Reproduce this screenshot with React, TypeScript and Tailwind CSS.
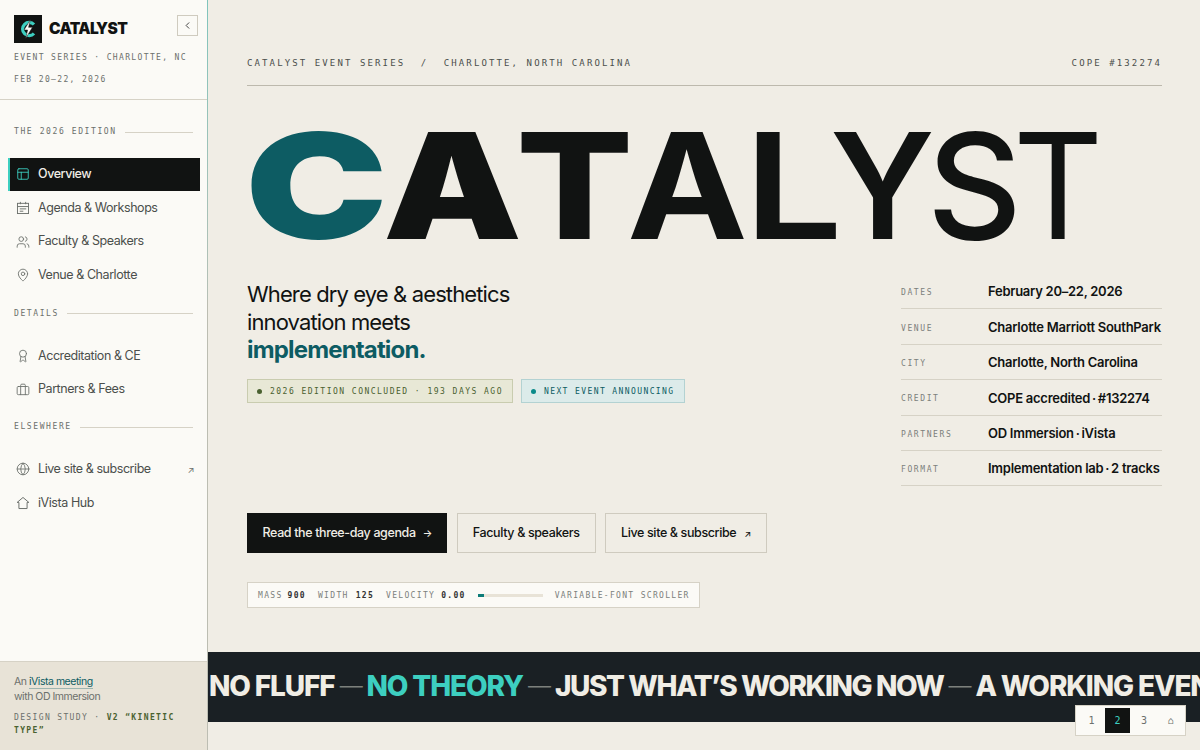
import { Award, Briefcase, ChevronLeft, Globe, MapPin, PanelsTopLeft, Users } from 'lucide-react';
import type { ReactNode } from 'react';

const mono = "font-['DejaVu_Sans_Mono','Liberation_Mono',monospace]";

function AgendaIcon() {
  return (
    <svg width="14" height="14" viewBox="0 0 24 24" fill="none" stroke="currentColor" strokeWidth="1.6">
      <rect x="2.5" y="4" width="19" height="17.5" />
      <path d="M2.5 9.5h19M7.5 1.5v4M16.5 1.5v4M6.5 13.5h11M6.5 17.5h6" />
    </svg>
  );
}

function HouseIcon() {
  return (
    <svg width="14" height="14" viewBox="0 0 24 24" fill="none" stroke="currentColor" strokeWidth="1.7" strokeLinejoin="round">
      <path d="M12 2.5 22 11h-3v10.5H5V11H2z" />
    </svg>
  );
}

function Logo() {
  return (
    <svg width="28" height="28" viewBox="0 0 28 28" className="shrink-0">
      <rect width="28" height="28" fill="#111312" />
      <path d="M20 9.5A6.6 6.6 0 1 0 20 18.5" fill="none" stroke="#3dcfc0" strokeWidth="3.2" />
      <path d="M16.5 4.5 10 15h3.6l-2 8.5 6.9-11.2h-3.9z" fill="#fbfaf6" stroke="#111312" strokeWidth="0.5" />
    </svg>
  );
}

function NavItem({ icon, label, active, trailing }: { icon: ReactNode; label: string; active?: boolean; trailing?: string }) {
  return (
    <a
      className={
        active
          ? 'flex h-[32.7px] items-center gap-[8px] border-l-2 border-[#3dcfc0] bg-[#111312] pl-[6px] pr-[6px] text-[12.5px] font-medium tracking-[-0.035em] text-[#f0ede5]'
          : 'flex h-[32.7px] items-center gap-[8px] border-l-2 border-transparent pl-[6px] pr-[6px] text-[12.5px] tracking-[-0.035em] text-[#4b4f4c]'
      }
    >
      <span className={active ? 'text-[#3dcfc0]' : 'text-[#6c706c]'}>{icon}</span>
      <span className="flex-1">{label}</span>
      {trailing && <span className="text-[9px] text-[#6c706c]">{trailing}</span>}
    </a>
  );
}

function SectionLabel({ text, className }: { text: string; className?: string }) {
  return (
    <div className={`flex items-center gap-2 ${className ?? ''}`}>
      <span className={`${mono} text-[8px] tracking-[0.2em] text-[#6c706c]`}>{text}</span>
      <span className="h-px flex-1 bg-[#d6d2c6]" />
    </div>
  );
}

function Sidebar() {
  return (
    <aside className="relative flex h-full w-[208px] shrink-0 flex-col border-r border-[#bcbdb2] bg-[#fbfaf6]">
      <span className="absolute top-0 right-[-1px] h-[300px] w-px bg-gradient-to-b from-[#7fc4bc] to-[#b5bfb5]" />
      <div className="border-b border-[#d6d2c6] pt-[15px] pr-[9px] pb-[8px] pl-[14px]">
        <div className="flex items-start">
          <Logo />
          <span className="ml-[7px] flex-1 text-[15.5px] leading-[28px] font-black tracking-[-0.04em] text-[#111312]">CATALYST</span>
          <button className="flex h-[21px] w-[21px] items-center justify-center border border-[#cfcbbf] text-[#333]">
            <ChevronLeft size={11} />
          </button>
        </div>
        <div className={`${mono} mt-[4px] text-[8px] leading-[22px] tracking-[0.17em] text-[#6c706c]`}>
          EVENT SERIES · CHARLOTTE, NC
          <br />
          FEB 20–22, 2026
        </div>
      </div>

      <div className="flex-1 px-[6px] pt-[26px]">
        <SectionLabel text="THE 2026 EDITION" className="mb-[20px] pl-2 pr-[8px]" />
        <nav className="mr-px ml-[2px] flex flex-col gap-px">
          <NavItem active icon={<PanelsTopLeft size={14} strokeWidth={1.5} />} label="Overview" />
          <NavItem icon={<AgendaIcon />} label="Agenda & Workshops" />
          <NavItem icon={<Users size={14} strokeWidth={1.5} />} label="Faculty & Speakers" />
          <NavItem icon={<MapPin size={14} strokeWidth={1.5} />} label="Venue & Charlotte" />
        </nav>
        <SectionLabel text="DETAILS" className="mt-[16px] mb-[20px] pl-2 pr-[8px]" />
        <nav className="mr-px ml-[2px] flex flex-col gap-px">
          <NavItem icon={<Award size={14} strokeWidth={1.5} />} label="Accreditation & CE" />
          <NavItem icon={<Briefcase size={14} strokeWidth={1.5} />} label="Partners & Fees" />
        </nav>
        <SectionLabel text="ELSEWHERE" className="mt-[15px] mb-[20px] pl-2 pr-[8px]" />
        <nav className="mr-px ml-[2px] flex flex-col gap-px">
          <NavItem icon={<Globe size={14} strokeWidth={1.5} />} label="Live site & subscribe" trailing="↗" />
          <NavItem icon={<HouseIcon />} label="iVista Hub" />
        </nav>
      </div>

      <div className="h-[89px] border-t border-[#d6d2c6] bg-[#e8e3d7] px-[14px] pt-[12px]">
        <p className="text-[10.5px] leading-[15px] tracking-[-0.045em] text-[#6c706c]">
          An <span className="border-b border-[#9db5b0] text-[#0d5c63]">iVista meeting</span>
          <br />
          with OD Immersion
        </p>
        <p className={`${mono} mt-[7px] text-[8px] leading-[13px] tracking-[0.17em] text-[#6c706c]`}>
          DESIGN STUDY · <span className="font-semibold text-[#4a6130]">V2 “KINETIC TYPE”</span>
        </p>
      </div>
    </aside>
  );
}

const letters = [
  { ch: 'C', cls: 'w-[138px] font-black text-[#0d5c63] scale-x-[1.3]' },
  { ch: 'A', cls: 'w-[133px] font-black scale-x-[1.19]' },
  { ch: 'T', cls: 'w-[111px] font-extrabold scale-x-[1.18]' },
  { ch: 'A', cls: 'w-[117px] font-bold scale-x-[1.1]' },
  { ch: 'L', cls: 'w-[86px] font-semibold scale-x-[1.19]' },
  { ch: 'Y', cls: 'w-[97px] font-semibold scale-x-[1.0]' },
  { ch: 'S', cls: 'w-[86px] font-medium scale-x-[1.0]' },
  { ch: 'T', cls: 'w-[80px] font-normal scale-x-[0.95]' },
];

const facts = [
  ['DATES', 'February 20–22, 2026'],
  ['VENUE', 'Charlotte Marriott SouthPark'],
  ['CITY', 'Charlotte, North Carolina'],
  ['CREDIT', 'COPE accredited\u2009·\u2009#132274'],
  ['PARTNERS', 'OD Immersion\u2009·\u2009iVista'],
  ['FORMAT', 'Implementation lab\u2009·\u20092 tracks'],
];

function Dash() {
  return <span className="mx-[5px] text-[23px] font-light text-[#7c807c]">—</span>;
}

function Main() {
  return (
    <main className="relative flex min-w-0 flex-1 flex-col overflow-hidden bg-[#f0ede5]">
      <div className="h-[652px] shrink-0 px-[39px] pt-[57px] pr-[38px]">
        <div className={`${mono} flex h-[29px] justify-between border-b border-[#bdb9ad] text-[9px] tracking-[0.235em] text-[#4b4f4c]`}>
          <span className="flex gap-[15.5px]">
            <span>CATALYST EVENT SERIES</span>
            <span>/</span>
            <span>CHARLOTTE, NORTH CAROLINA</span>
          </span>
          <span>COPE #132274</span>
        </div>

        <h1 className="mt-[15px] -ml-[2px] flex h-[170px] text-[147px] leading-[170px] text-[#111312]">
          {letters.map((l, i) => (
            <span key={i} className={`inline-block shrink-0 origin-left ${l.cls}`}>
              {l.ch}
            </span>
          ))}
        </h1>

        <div className="mt-[10px] flex justify-between">
          <div>
            <p className="text-[22px] leading-[27.5px] tracking-[-0.04em] text-[#111312]">
              Where dry eye &amp; aesthetics
              <br />
              innovation meets
              <br />
              <strong className="text-[24px] font-bold tracking-[-0.035em] text-[#0d5c63]">implementation.</strong>
            </p>
            <div className={`${mono} mt-[14px] flex gap-2 text-[8px]`}>
              <span className="flex h-[24px] items-center gap-2 border border-[#c9ccaf] bg-[#e8e8d6] px-[9px] pt-[2px] tracking-[0.185em] text-[#4a6130]">
                <span className="h-[5px] w-[5px] rounded-full bg-[#4a6130]" />
                2026 EDITION CONCLUDED · 193 DAYS AGO
              </span>
              <span className="flex h-[24px] items-center gap-2 border border-[#b3d2d2] bg-[#dcebea] px-[9px] pt-[2px] tracking-[0.175em] text-[#0d5c63]">
                <span className="h-[5px] w-[5px] rounded-full bg-[#0b8a8a]" />
                NEXT EVENT ANNOUNCING
              </span>
            </div>
          </div>

          <dl className="mt-[-7px] w-[261px]">
            {facts.map(([k, v]) => (
              <div key={k} className="flex h-[35.4px] items-center border-b border-[#d6d2c6] pt-[2px]">
                <dt className={`${mono} mt-[2px] w-[87px] text-[8px] tracking-[0.2em] text-[#7c807c]`}>{k}</dt>
                <dd className="text-[13px] font-semibold tracking-[-0.02em] whitespace-nowrap text-[#111312]">{v}</dd>
              </div>
            ))}
          </dl>
        </div>

        <div className="mt-[27px] flex gap-[9.5px] text-[12.5px] font-medium tracking-[-0.03em]">
          <a className="flex h-[40px] items-center gap-[7px] bg-[#111312] px-[15.5px] text-[#f0ede5]">
            Read the three-day agenda <span className="text-[10px]">→</span>
          </a>
          <a className="flex h-[40px] items-center border border-[#cfcbbf] px-[15px] text-[#111312]">Faculty &amp; speakers</a>
          <a className="flex h-[40px] items-center gap-2 border border-[#cfcbbf] px-[15px] text-[#111312]">
            Live site &amp; subscribe <span className="text-[9px]">↗</span>
          </a>
        </div>

        <div className={`${mono} mt-[29px] flex h-[26px] w-[453px] items-center border border-[#d6d2c6] bg-[#fbfaf6] pt-px pr-[6px] pl-[10px] text-[8px] tracking-[0.165em] whitespace-nowrap text-[#7c807c]`}>
          <span>MASS</span>
          <b className="ml-[5px] font-bold text-[#333]">900</b>
          <span className="ml-[12px]">WIDTH</span>
          <b className="ml-[7px] font-bold text-[#333]">125</b>
          <span className="ml-[12px]">VELOCITY</span>
          <b className="ml-[6px] font-bold text-[#333]">0.00</b>
          <span className="ml-[12px] h-[3px] w-[65px] bg-[#e8e3d7]">
            <span className="block h-full w-[6px] bg-[#0d7c78]" />
          </span>
          <span className="ml-[12px]">VARIABLE-FONT SCROLLER</span>
        </div>
      </div>

      <div className="flex h-[70px] shrink-0 items-center overflow-hidden bg-[#1a2024] pb-[2px] pl-px text-[28px] font-extrabold tracking-[-0.04em] whitespace-nowrap text-[#f0ede5]">
        <span>NO FLUFF</span>
        <Dash />
        <span className="text-[#3dcfc0]">NO THEORY</span>
        <Dash />
        <span className="tracking-[-0.05em]">JUST WHAT’S WORKING NOW</span>
        <Dash />
        <span>A WORKING EVENT</span>
      </div>

      <div className={`${mono} absolute right-[14px] bottom-[14px] flex h-[31px] w-[111px] items-center border border-[#d6d2c6] bg-[#fbfaf6] p-[2px] text-[10px] text-[#6c706c]`}>
        <span className="flex h-full w-[27px] items-center justify-center">1</span>
        <span className="flex h-[25px] w-[25px] items-center justify-center bg-[#111312] text-[#3dcfc0]">2</span>
        <span className="flex h-full w-[28px] items-center justify-center">3</span>
        <span className="flex h-full w-[25px] items-center justify-center">⌂</span>
      </div>
    </main>
  );
}

export default function App() {
  return (
    <div className="flex h-[750px] w-[1200px] overflow-hidden font-['Inter',sans-serif]">
      <Sidebar />
      <Main />
    </div>
  );
}
